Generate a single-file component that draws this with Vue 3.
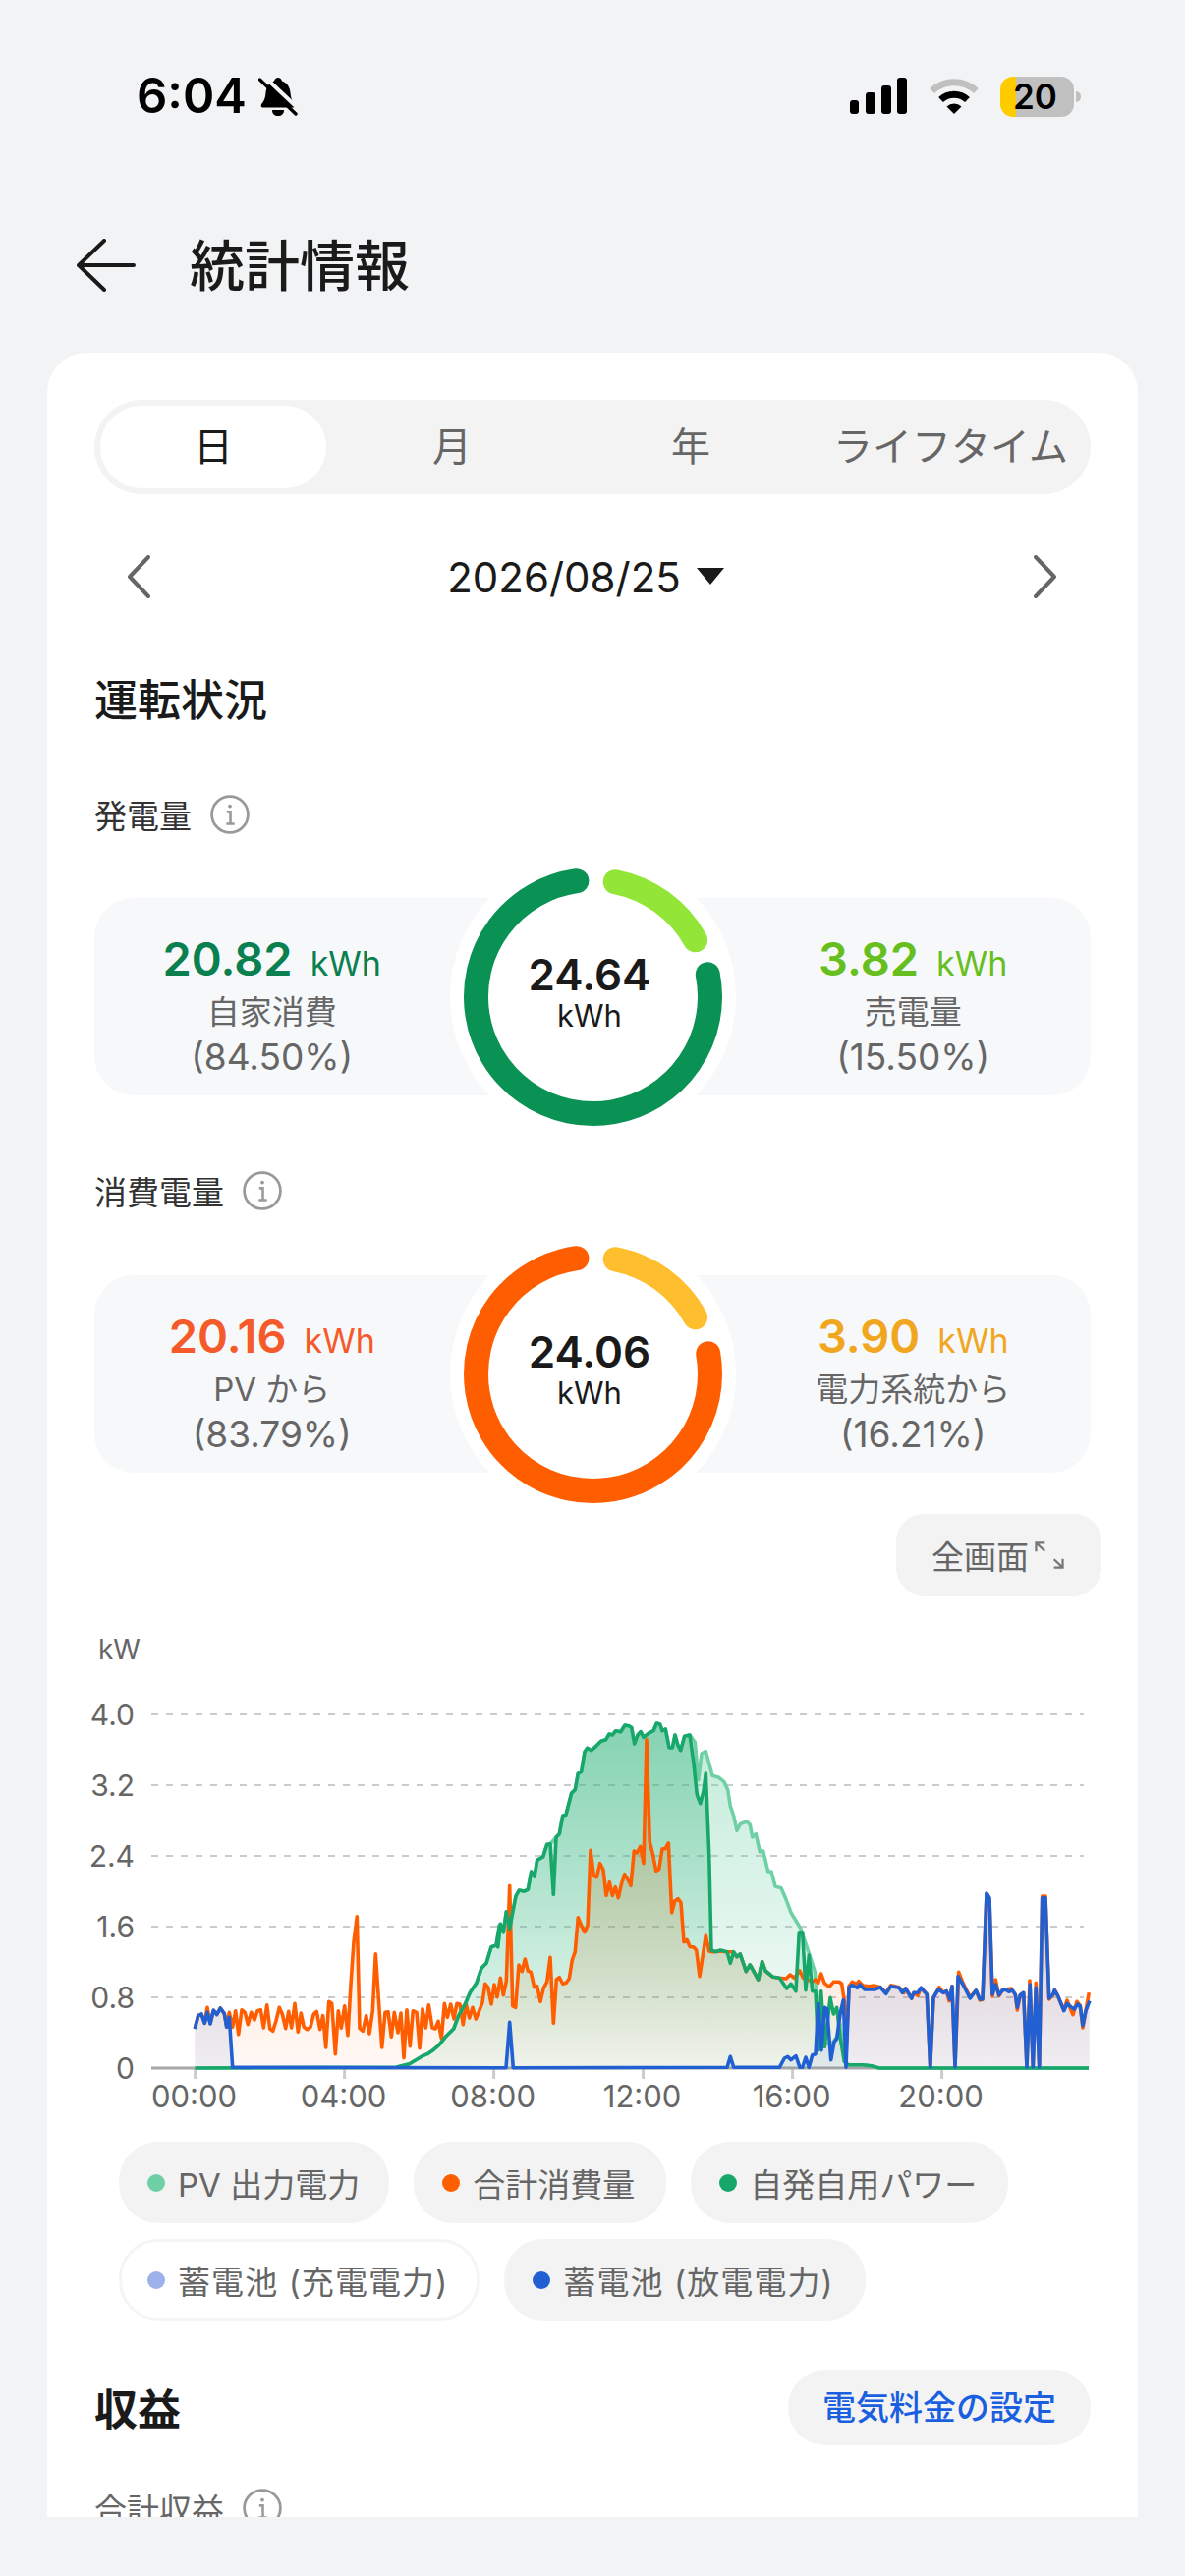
<script setup>
const tabs = ['日', '月', '年', 'ライフタイム']

// ring geometry, angles in degrees clockwise from the top
const R = 119
const C = 145.5
function polar(deg) {
  const a = (deg * Math.PI) / 180
  return [C + R * Math.sin(a), C - R * Math.cos(a)]
}
function arc(from, to) {
  const [x1, y1] = polar(from)
  const [x2, y2] = polar(to)
  const large = to - from > 180 ? 1 : 0
  return `M${x1.toFixed(1)} ${y1.toFixed(1)}A${R} ${R} 0 ${large} 1 ${x2.toFixed(1)} ${y2.toFixed(1)}`
}

const sections = [
  {
    title: '発電量',
    total: '24.64',
    big: { d: arc(79, 352), color: '#0a9254' },
    small: { d: arc(11, 61), color: '#93e637' },
    left: { value: '20.82', label: '自家消費', pct: '(84.50%)', color: '#0a7f4f' },
    right: { value: '3.82', label: '売電量', pct: '(15.50%)', color: '#66bf1f' },
  },
  {
    title: '消費電量',
    total: '24.06',
    big: { d: arc(80, 352), color: '#ff5e00' },
    small: { d: arc(11, 61), color: '#ffbe2e' },
    left: { value: '20.16', label: 'PV から', pct: '(83.79%)', color: '#f55a2a' },
    right: { value: '3.90', label: '電力系統から', pct: '(16.21%)', color: '#f0a71f' },
  },
]

const legend = [
  { name: 'PV 出力電力', color: '#6fd0a6' },
  { name: '合計消費量', color: '#ff5e00' },
  { name: '自発自用パワー', color: '#18a76b' },
  { name: '蓄電池 (充電電力)', color: '#9db0ea', off: true, wide: true },
  { name: '蓄電池 (放電電力)', color: '#2160d3', wide: true },
]

// chart, drawn in page coordinates
const Y0 = 2105
const gridRows = [
  { label: '4.0', y: 1745 },
  { label: '3.2', y: 1817 },
  { label: '2.4', y: 1889 },
  { label: '1.6', y: 1961 },
  { label: '0.8', y: 2033 },
]
const hours = ['00:00', '04:00', '08:00', '12:00', '16:00', '20:00'].map((label, i) => ({
  label,
  x: 198.6 + 152 * i,
}))

// points were read off 3x crops, so each run carries the crop origin
function run(ox, oy, text) {
  return text
    .trim()
    .split(/\s+/)
    .map((p) => {
      const [x, y] = p.split(',').map(Number)
      return [ox + x / 3, oy + y / 3]
    })
}
const line = (pts) => 'M' + pts.map((p) => p[0].toFixed(1) + ' ' + p[1].toFixed(1)).join('L')
const area = (pts) =>
  line(pts) + `L${pts[pts.length - 1][0].toFixed(1)} ${Y0}L${pts[0][0].toFixed(1)} ${Y0}Z`

const rampA = [
  [198.6, Y0],
  ...run(190, 1900, '640,613 650,610 680,602 700,590 720,578 735,572 750,562 770,545 790,520 815,495 830,455 850,420 865,385 885,355 900,310 915,295 930,245 945,240 955,180'),
  ...run(500, 1740, '20,725 28,655 37,680 46,617 56,670 65,620 75,570 85,552 100,555 112,550 122,495 132,510 140,460 158,450 170,412 180,410'),
]
const rampB = run(500, 1740, '198,390 208,380 218,325 228,322 245,255 256,245 265,195 275,190 285,130 293,118 305,125 320,112 335,97 350,92 360,75 370,78 380,65 395,68 408,48 420,50 428,55 437,105 447,78 456,68 465,85 485,70 495,65 505,42 515,45 522,65 532,60 543,117 553,117 561,78 570,110 578,125 590,82 606,78')
const tail = [...run(790, 1960, '225,425 265,425 290,428 315,435'), [1108, Y0]]

const pv = [
  ...rampA,
  ...rampB,
  ...run(500, 1740, '622,100 632,215 642,135 655,128'),
  ...run(700, 1770, '65,75 75,112 95,118 110,130 122,155 130,205 140,235 150,280 160,260 180,252 190,262 197,300 208,290 220,345 230,342 245,405 255,405 267,450 285,455 300,490 315,530 330,555 345,580 360,625 375,670 388,710 392,770 400,880 420,930 440,930 455,910 465,870 478,985 490,995'),
  ...tail,
]

const selfUse = [
  ...rampA,
  ...run(500, 1740, '190,565'),
  ...rampB,
  ...run(500, 1740, '618,165 628,260 638,287 648,250 655,195'),
  ...run(700, 1770, '65,350 72,645 85,650 100,645 120,650 130,685 140,650 150,665 160,657 178,710 190,690 215,735 227,680 237,708 260,727 280,730 302,762 315,748 330,770 340,590 350,590 360,767 370,660 380,770 390,770 398,950 407,770 418,940 435,790 445,840 455,820 465,910 478,985 490,995'),
  ...tail,
]

const load = [
  ...run(190, 1900, '25,495 35,455 45,450 55,478 63,430 72,478 82,440 92,450 103,432 115,450 122,490 130,445 140,490 149,440 158,512 168,437 178,445 187,482 197,445 207,468 216,440 226,437 235,492 245,422 254,495 263,502 273,470 283,430 292,450 302,494 311,442 320,492 330,418 340,505 349,447 358,490 368,497 378,490 388,450 397,442 407,497 416,455 425,552 434,412 443,418 454,572 463,440 472,493 482,425 492,515 501,360 510,230 520,152 528,494 538,502 548,455 558,510 568,440 577,266 587,420 596,552 606,445 615,443 625,520 634,445 645,507 654,447 663,584 672,437 682,548 691,440 702,445 711,554 720,434 730,492 739,422 750,492 759,495 768,472 778,525 787,418 796,460 806,420 816,465 825,418 834,420 844,482 853,420 863,462 873,430 883,465 893,440 903,415 911,358 920,368 930,420 939,360 948,398 958,340'),
  ...run(500, 1740, '37,872 46,830 56,538 65,905 74,910 84,780 94,800 103,762 112,798 121,802 131,848 140,845 150,892 160,850 170,832 180,757 190,958 199,825 208,818 218,838 228,835 238,822 247,765 256,740 265,635 275,660 285,680 294,660 303,430 313,508 322,512 332,470 342,490 351,568 361,527 370,568 379,542 388,575 398,530 407,503 417,520 426,538 436,432 445,438 455,418 465,470 474,92 484,405 493,440 503,493 512,488 522,425 531,425 541,408 551,620 560,585 570,578 579,590 588,710 597,703 607,725 617,725 626,735 636,815 646,750 655,690'),
  ...run(700, 1770, '65,648 75,650 100,648 120,650 135,650 150,665 160,657 178,710 190,690 215,735 227,680 237,708 260,727 280,730 300,732 312,720 325,730 342,708 352,730 365,735 380,742 390,735 398,745 407,717 417,745 432,757 445,742 462,742 470,748 478,800 484,950'),
  ...run(790, 1960, '222,185 232,172 245,178 252,170 265,183 285,185 298,183 318,188 335,205 350,182 375,188 390,205'),
  ...run(880, 1960, '125,192 143,222 150,205 162,214 172,190 190,210 200,432 210,220 228,188 240,205 250,200 258,230 267,185 276,432 287,142 300,175 322,218 340,198 352,228 360,225 372,-95 381,-80 390,215 400,165 410,215 420,198 430,195 447,192 460,210 466,258 475,212 485,205 495,432 504,168 514,432 523,175 533,432 542,-90 552,-90 563,225 575,212 580,197 590,215 608,258 618,228 636,272 648,232 658,245 666,312 675,260 685,205'),
]

const discharge = [
  ...run(190, 1900, '25,495 35,455 45,450 55,478 63,445 72,480 82,438 92,452 103,432 115,448 122,490 130,460 140,613'),
  ...run(500, 1740, '45,1094 56,955 67,1094'),
  ...run(700, 1770, '120,1003 130,970 140,1003 280,1003 295,975 305,970 315,980 330,968 342,1003 350,1003 360,972 370,1003 380,965 390,962 398,808 408,950 418,820 425,825 437,980 447,925 455,915 465,840 475,797 483,1003 492,760 500,752'),
  ...run(790, 1960, '235,183 248,190 255,180 270,195 300,195 318,188 335,208 350,185 375,190'),
  ...run(880, 1960, '115,205 125,192 143,222 150,205 162,205 172,190 190,210 200,432 210,220 225,195 240,205 250,200 260,225 267,185 276,432 285,155 300,180 322,222 340,198 352,225 360,225 372,-99 381,-85 390,210 400,180 410,212 420,198 430,195 440,202 450,197 460,210 466,250 475,212 485,205 495,432 505,180 514,432 523,190 533,432 542,-85 552,-85 563,222 575,210 580,197 590,215 608,260 618,238 632,250 640,255 650,240 658,245 666,305 675,260 687,230'),
]

const series = [
  { id: 'pv', pts: pv, color: '#6fd0a6', top: 0.42, bottom: 0.06 },
  { id: 'load', pts: load, color: '#ff5e00', top: 0.3, bottom: 0.04 },
  { id: 'self', pts: selfUse, color: '#18a76b', top: 0.36, bottom: 0.03 },
  { id: 'out', pts: discharge, color: '#2160d3', top: 0.17, bottom: 0.07 },
].map((s) => ({ ...s, fill: area(s.pts), stroke: line(s.pts) }))
</script>

<template>
  <div class="page">
    <div class="status">
      <span class="time">6:04</span>
      <svg class="bell" width="40" height="41" viewBox="0 0 40 41">
        <path d="M20 1c2 0 3.500 1.500 4 3.500 5 1.500 8 6 8.500 12 .5 5 1.500 8 4 11 1.500 1.800 1 4-1.500 4H5c-2.500 0-3-2.200-1.500-4 2.500-3 3.500-6 4-11 .5-6 3.500-10.500 8.500-12C16.500 2.500 18 1 20 1z" fill="#000" />
        <path d="M14 34h12c0 4-2.500 6-6 6s-6-2-6-6z" fill="#000" />
        <path d="M5 -1L42 34" stroke="#f2f3f5" stroke-width="4" />
        <path d="M1.500 3L38 38" stroke="#000" stroke-width="3.400" stroke-linecap="round" />
      </svg>
      <div class="status-right">
        <svg width="59" height="38" viewBox="0 0 59 38">
          <rect x="1" y="23" width="9" height="14" rx="3" />
          <rect x="17" y="15" width="10" height="22" rx="3" />
          <rect x="33" y="8" width="10" height="29" rx="3" />
          <rect x="49" y="0" width="10" height="37" rx="3" />
        </svg>
        <svg class="wifi" width="50" height="38" viewBox="0 0 50 38">
          <path d="M2.500 13.500A33 33 0 0 1 47.500 13.500" fill="none" stroke="#c0c0c0" stroke-width="7" />
          <path d="M11.500 22.500A20 20 0 0 1 38.500 22.500" fill="none" stroke="#000" stroke-width="7" />
          <path d="M25 37L17.500 29.500A11 11 0 0 1 32.500 29.500Z" fill="#000" />
        </svg>
        <div class="battery"><span>20</span></div>
        <div class="battery-tip"></div>
      </div>
    </div>

    <div class="header">
      <svg width="60" height="54" viewBox="0 0 60 54" fill="none" stroke="#1a1a1a" stroke-width="4" stroke-linecap="round" stroke-linejoin="round">
        <path d="M28 2L2 27L28 52M3 27H58" />
      </svg>
      <h1>統計情報</h1>
    </div>

    <div class="card">
      <div class="tabs">
        <div v-for="(t, i) in tabs" :key="t" class="tab" :class="{ active: i === 0 }">{{ t }}</div>
      </div>

      <div class="date-row">
        <svg width="24" height="44" viewBox="0 0 24 44" fill="none" stroke="#666" stroke-width="4" stroke-linecap="round" stroke-linejoin="round">
          <path d="M22 2L3 22L22 42" />
        </svg>
        <div class="date">
          <span>2026/08/25</span>
          <svg width="30" height="19" viewBox="0 0 30 19"><path d="M1 1H29L15 18Z" fill="#1a1a1a" /></svg>
        </div>
        <svg width="24" height="44" viewBox="0 0 24 44" fill="none" stroke="#666" stroke-width="4" stroke-linecap="round" stroke-linejoin="round">
          <path d="M2 2L21 22L2 42" />
        </svg>
      </div>

      <h2 class="heading">運転状況</h2>

      <template v-for="(s, i) in sections" :key="s.title">
        <div class="sub-title" :class="{ second: i === 1 }">
          <span>{{ s.title }}</span>
          <svg class="info" width="40" height="40" viewBox="0 0 38 38" fill="none" stroke="#999" stroke-width="2.600">
            <circle cx="19" cy="19" r="17.500" />
            <path d="M16 16.500h3.500V28M15.500 28h8" stroke-width="2.400" />
            <circle cx="19" cy="11" r="1.800" fill="#999" stroke="none" />
          </svg>
        </div>
        <div class="panel">
          <div class="side">
            <div class="num" :style="{ color: s.left.color }"><b>{{ s.left.value }}</b><em>kWh</em></div>
            <div class="txt">{{ s.left.label }}</div>
            <div class="txt pct">{{ s.left.pct }}</div>
          </div>
          <div class="ring">
            <svg width="291" height="291" viewBox="0 0 291 291" fill="none" stroke-width="25" stroke-linecap="round">
              <circle cx="145.500" cy="145.500" r="145.500" fill="#fff" />
              <path :d="s.big.d" :stroke="s.big.color" />
              <path :d="s.small.d" :stroke="s.small.color" />
            </svg>
            <div class="ring-text">
              <b>{{ s.total }}</b>
              <span>kWh</span>
            </div>
          </div>
          <div class="side">
            <div class="num" :style="{ color: s.right.color }"><b>{{ s.right.value }}</b><em>kWh</em></div>
            <div class="txt">{{ s.right.label }}</div>
            <div class="txt pct">{{ s.right.pct }}</div>
          </div>
        </div>
      </template>

      <div class="full-row">
        <div class="full-btn">
          <span>全画面</span>
          <svg width="30" height="28" viewBox="0 0 32 30" fill="none" stroke="#777" stroke-width="2.400">
            <path d="M1.500 11V1.500H11M1.500 1.500L11 10.500M30.500 19V28.500H21M30.500 28.500L21 19.500" />
          </svg>
        </div>
      </div>

      <svg class="chart" width="1110" height="520" viewBox="48 1640 1110 520">
        <defs>
          <linearGradient v-for="s in series" :id="'g-' + s.id" :key="s.id" x1="0" y1="0" x2="0" y2="1">
            <stop offset="0" :stop-color="s.color" :stop-opacity="s.top" />
            <stop offset="1" :stop-color="s.color" :stop-opacity="s.bottom" />
          </linearGradient>
        </defs>
        <text class="axis unit" x="100" y="1689">kW</text>
        <g v-for="r in gridRows" :key="r.label">
          <line x1="154" x2="1103" :y1="r.y" :y2="r.y" stroke="#cbcbcb" stroke-width="2" stroke-dasharray="7 8" />
          <text class="axis" x="137" :y="r.y + 11" text-anchor="end">{{ r.label }}</text>
        </g>
        <text class="axis" x="137" :y="Y0 + 11" text-anchor="end">0</text>
        <g v-for="h in hours" :key="h.label">
          <line :x1="h.x" :x2="h.x" :y1="Y0" :y2="Y0 + 11" stroke="#ccc" stroke-width="3" />
          <text class="axis hour" :x="h.x - 1" y="2145" text-anchor="middle">{{ h.label }}</text>
        </g>
        <line x1="154" x2="1108" :y1="Y0" :y2="Y0" stroke="#a8a8a8" stroke-width="3" />
        <path v-for="s in series" :key="'a-' + s.id" :d="s.fill" :fill="'url(#g-' + s.id + ')'" />
        <path
          v-for="s in series"
          :key="'l-' + s.id"
          :d="s.stroke"
          :stroke="s.color"
          fill="none"
          stroke-width="3.600"
          stroke-linejoin="round"
        />
      </svg>

      <div class="legend">
        <div v-for="l in legend" :key="l.name" class="chip" :class="{ off: l.off, wide: l.wide }">
          <i :style="{ background: l.color }"></i>
          <span>{{ l.name }}</span>
        </div>
      </div>

      <div class="income">
        <h2 class="heading">収益</h2>
        <div class="tariff">電気料金の設定</div>
      </div>

      <div class="sub-title last">
        <span>合計収益</span>
        <svg class="info" width="40" height="40" viewBox="0 0 38 38" fill="none" stroke="#999" stroke-width="2.600">
          <circle cx="19" cy="19" r="17.500" />
          <path d="M16 16.500h3.500V28M15.500 28h8" stroke-width="2.400" />
          <circle cx="19" cy="11" r="1.800" fill="#999" stroke="none" />
        </svg>
      </div>
    </div>
  </div>
</template>

<style>
html,
body {
  background: #f2f3f5;
}
</style>

<style scoped>
.page {
  width: 1206px;
  height: 2622px;
  overflow: hidden;
  background: #f2f3f5;
  font-family: Inter, "Noto Sans CJK JP", sans-serif;
  color: #1a1a1a;
}

.status {
  display: flex;
  align-items: center;
  height: 96px;
  padding: 50px 106px 0 139px;
}
.time {
  font-size: 49px;
  font-weight: 600;
  color: #000;
  line-height: 96px;
}
.bell {
  margin-left: 12px;
}
.status-right {
  margin-left: auto;
  display: flex;
  align-items: center;
}
.wifi {
  margin-left: 23px;
}
.battery {
  margin-left: 22px;
  width: 75px;
  height: 41px;
  border-radius: 13px;
  background: linear-gradient(90deg, #ffcc00 16px, #c0c0c0 16px);
  font-size: 35px;
  font-weight: 600;
  line-height: 41px;
  color: #000;
  text-align: center;
}
.battery span {
  display: block;
  padding-right: 4px;
}
.battery-tip {
  margin-left: 2px;
  width: 5px;
  height: 11px;
  border-radius: 0 6px 6px 0;
  background: #c0c0c0;
}

.header {
  display: flex;
  align-items: center;
  height: 120px;
  margin-top: 64px;
  padding-left: 78px;
}
.header h1 {
  margin: 0 0 8px 55px;
  font-size: 56px;
  font-weight: 500;
}

.card {
  margin: 29px 48px 0;
  height: 2203px;
  overflow: hidden;
  padding: 48px 48px 0;
  box-sizing: border-box;
  background: #fff;
  border-radius: 40px 40px 0 0;
}

.tabs {
  display: flex;
  gap: 13px;
  height: 96px;
  padding: 6px;
  box-sizing: border-box;
  border-radius: 48px;
  background: #f3f3f3;
}
.tab {
  flex: 0 0 230px;
  border-radius: 42px;
  font-size: 40px;
  line-height: 84px;
  text-align: center;
  color: #666;
}
.tab:last-child {
  flex: 1;
}
.tab.active {
  background: #fff;
  color: #1a1a1a;
}

.date-row {
  display: flex;
  align-items: center;
  justify-content: space-between;
  height: 80px;
  margin-top: 44px;
  padding: 0 34px 0 33px;
}
.date {
  display: flex;
  align-items: center;
  gap: 15px;
  margin-right: 12px;
  font-size: 42px;
}
.date svg {
  margin-bottom: 2px;
}

.heading {
  margin: 56px 0 0;
  font-size: 44px;
  font-weight: 500;
  line-height: 60px;
}

.sub-title {
  display: flex;
  align-items: center;
  gap: 19px;
  height: 44px;
  margin-top: 64px;
  font-size: 33px;
  color: #333;
}
.sub-title.second {
  margin-top: 75px;
}
.sub-title.last {
  margin-top: 42px;
  color: #666;
}

.panel {
  display: grid;
  grid-template-columns: 1fr 291px 1fr;
  grid-template-rows: 201px;
  margin-top: 63px;
  border-radius: 40px;
  background: #f7f8fa;
}
.sub-title.second + .panel {
  margin-top: 64px;
}
.side {
  padding-top: 31px;
  text-align: center;
}
.num {
  display: flex;
  align-items: baseline;
  justify-content: center;
  gap: 18px;
  height: 62px;
  line-height: 62px;
}
.num b {
  font-size: 47px;
  font-weight: 600;
}
.num em {
  font-size: 34px;
  font-style: normal;
}
.txt {
  font-size: 33px;
  line-height: 46px;
  color: #666;
}
.txt.pct {
  font-size: 37px;
}
.ring {
  position: relative;
  height: 291px;
  margin-top: -45px;
}
.ring svg {
  display: block;
}
.ring-text {
  position: absolute;
  inset: 0;
  display: flex;
  flex-direction: column;
  align-items: center;
  justify-content: center;
  padding: 0 6px 8px 0;
}
.ring-text b {
  font-size: 44px;
  font-weight: 600;
  line-height: 46px;
}
.ring-text span {
  font-size: 31px;
  line-height: 38px;
}

.full-row {
  display: flex;
  justify-content: flex-end;
  margin: 42px -11px 0 0;
}
.full-btn {
  display: flex;
  align-items: center;
  gap: 6px;
  height: 83px;
  padding: 0 38px 0 36px;
  border-radius: 28px;
  background: #f3f3f3;
  font-size: 33px;
  color: #666;
}

.chart {
  display: block;
  margin: 16px 0 0 -48px;
}
.axis {
  font-size: 30px;
  fill: #666;
}
.axis.unit {
  font-size: 28px;
}
.axis.hour {
  font-size: 31px;
}

.legend {
  display: flex;
  flex-wrap: wrap;
  gap: 16px 25px;
  margin: 20px 0 0 25px;
  width: 960px;
}
.chip {
  display: flex;
  align-items: center;
  gap: 13px;
  height: 83px;
  padding: 0 32px 0 29px;
  box-sizing: border-box;
  border-radius: 40px;
  background: #f3f3f3;
  font-size: 33px;
  color: #666;
}
.chip:first-child {
  padding-right: 30px;
}
.chip.wide {
  letter-spacing: 1.1px;
}
.chip.off {
  background: #fff;
  border: 3px solid #f5f5f5;
  padding: 0 29px 0 26px;
}
.chip i {
  width: 18px;
  height: 18px;
  border-radius: 50%;
}

.income {
  display: flex;
  align-items: center;
  justify-content: space-between;
  margin-top: 50px;
}
.income .heading {
  margin: 4px 0 0;
  font-weight: 700;
}
.tariff {
  height: 77px;
  padding: 0 35px;
  border-radius: 38px;
  background: #f3f3f3;
  font-size: 34px;
  font-weight: 500;
  line-height: 77px;
  color: #1a5fe0;
}
</style>
